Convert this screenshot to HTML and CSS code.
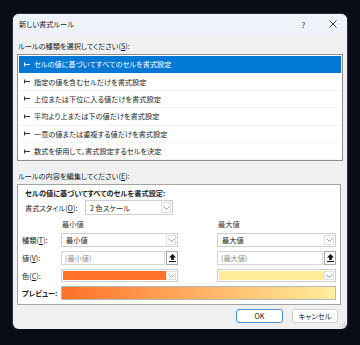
FILE: index.html
```html
<!DOCTYPE html>
<html lang="ja">

<head>
    <meta charset="UTF-8">
    <meta name="viewport" content="width=device-width, initial-scale=1.0">
    <title>新しい書式ルール</title>
    <link rel="stylesheet" href="styles.css">
</head>

<body>
    <div class="dialog">
        <div class="titlebar">
            <div class="title">新しい書式ルール</div>
            <div class="tb-btn">?</div>
            <div class="tb-btn">
                <svg width="8" height="8" viewBox="0 0 8 8"><path d="M0.5 0.5 L7.5 7.5 M7.5 0.5 L0.5 7.5" stroke="#333" stroke-width="0.9" fill="none"/></svg>
            </div>
        </div>

        <div class="body">
            <div class="label">ルールの種類を選択してください(<u>S</u>):</div>
            <div class="list">
                <div class="item selected"><svg class="bullet" width="6" height="5" viewBox="0 0 6 5"><path d="M0.6 0.5 V4.5 M0.6 2.5 H6" stroke="currentColor" stroke-width="1.1" fill="none"/></svg>セルの値に基づいてすべてのセルを書式設定</div>
                <div class="item"><svg class="bullet" width="6" height="5" viewBox="0 0 6 5"><path d="M0.6 0.5 V4.5 M0.6 2.5 H6" stroke="currentColor" stroke-width="1.1" fill="none"/></svg>指定の値を含むセルだけを書式設定</div>
                <div class="item"><svg class="bullet" width="6" height="5" viewBox="0 0 6 5"><path d="M0.6 0.5 V4.5 M0.6 2.5 H6" stroke="currentColor" stroke-width="1.1" fill="none"/></svg>上位または下位に入る値だけを書式設定</div>
                <div class="item"><svg class="bullet" width="6" height="5" viewBox="0 0 6 5"><path d="M0.6 0.5 V4.5 M0.6 2.5 H6" stroke="currentColor" stroke-width="1.1" fill="none"/></svg>平均より上または下の値だけを書式設定</div>
                <div class="item"><svg class="bullet" width="6" height="5" viewBox="0 0 6 5"><path d="M0.6 0.5 V4.5 M0.6 2.5 H6" stroke="currentColor" stroke-width="1.1" fill="none"/></svg>一意の値または重複する値だけを書式設定</div>
                <div class="item"><svg class="bullet" width="6" height="5" viewBox="0 0 6 5"><path d="M0.6 0.5 V4.5 M0.6 2.5 H6" stroke="currentColor" stroke-width="1.1" fill="none"/></svg>数式を使用して、書式設定するセルを決定</div>
            </div>

            <div class="label label2">ルールの内容を編集してください(<u>E</u>):</div>
            <div class="panel">
                <div class="heading">セルの値に基づいてすべてのセルを書式設定:</div>
                <div class="style-row">
                    <div class="style-label">書式スタイル(<u>O</u>):</div>
                    <div class="select style-select">
                        <span class="sel-text">2 色スケール</span>
                        <span class="arrow"><svg width="7" height="4" viewBox="0 0 7 4"><path d="M0.5 0.5 L3.5 3.5 L6.5 0.5" stroke="#8a8a8a" stroke-width="0.8" fill="none"/></svg></span>
                    </div>
                </div>

                <div class="scale">
                    <div></div>
                    <div class="col-head">最小値</div>
                    <div></div>
                    <div class="col-head">最大値</div>

                    <div class="row-label">種類(<u>T</u>):</div>
                    <div class="select">
                        <span class="sel-text">最小値</span>
                        <span class="arrow"><svg width="7" height="4" viewBox="0 0 7 4"><path d="M0.5 0.5 L3.5 3.5 L6.5 0.5" stroke="#8a8a8a" stroke-width="0.8" fill="none"/></svg></span>
                    </div>
                    <div></div>
                    <div class="select">
                        <span class="sel-text">最大値</span>
                        <span class="arrow"><svg width="7" height="4" viewBox="0 0 7 4"><path d="M0.5 0.5 L3.5 3.5 L6.5 0.5" stroke="#8a8a8a" stroke-width="0.8" fill="none"/></svg></span>
                    </div>

                    <div class="row-label">値(<u>V</u>):</div>
                    <div class="value-field">
                        <span class="input">(最小値)</span>
                        <span class="pick"><svg width="7" height="8" viewBox="0 0 7 8"><path d="M3.5 0 L7 3.6 H4.8 V6 H2.2 V3.6 H0 Z" fill="#111"/><rect x="0" y="7" width="7" height="1" fill="#111"/></svg></span>
                    </div>
                    <div></div>
                    <div class="value-field">
                        <span class="input">(最大値)</span>
                        <span class="pick"><svg width="7" height="8" viewBox="0 0 7 8"><path d="M3.5 0 L7 3.6 H4.8 V6 H2.2 V3.6 H0 Z" fill="#111"/><rect x="0" y="7" width="7" height="1" fill="#111"/></svg></span>
                    </div>

                    <div class="row-label">色(<u>C</u>):</div>
                    <div class="select color-select">
                        <span class="swatch min-color"></span>
                        <span class="arrow"><svg width="7" height="4" viewBox="0 0 7 4"><path d="M0.5 0.5 L3.5 3.5 L6.5 0.5" stroke="#8a8a8a" stroke-width="0.8" fill="none"/></svg></span>
                    </div>
                    <div></div>
                    <div class="select color-select">
                        <span class="swatch max-color"></span>
                        <span class="arrow"><svg width="7" height="4" viewBox="0 0 7 4"><path d="M0.5 0.5 L3.5 3.5 L6.5 0.5" stroke="#8a8a8a" stroke-width="0.8" fill="none"/></svg></span>
                    </div>

                    <div class="row-label preview-label">プレビュー:</div>
                    <div class="preview"></div>
                </div>
            </div>

            <div class="buttons">
                <div class="btn default">OK</div>
                <div class="btn">キャンセル</div>
            </div>
        </div>

        <svg class="grip" width="7" height="7" viewBox="0 0 7 7">
            <rect x="5" y="1" width="1" height="1" fill="#b5b5b5"/>
            <rect x="3" y="3" width="1" height="1" fill="#b5b5b5"/>
            <rect x="5" y="3" width="1" height="1" fill="#b5b5b5"/>
            <rect x="1" y="5" width="1" height="1" fill="#b5b5b5"/>
            <rect x="3" y="5" width="1" height="1" fill="#b5b5b5"/>
            <rect x="5" y="5" width="1" height="1" fill="#b5b5b5"/>
        </svg>
    </div>
</body>

</html>
```

FILE: styles.css
```css
* {
    margin: 0;
    padding: 0;
    box-sizing: border-box;
}

body {
    background: #090d18;
    font-family: "Noto Sans CJK JP", "Noto Sans", sans-serif;
    font-size: 7.2px;
    font-feature-settings: "palt";
    color: #1b1b1b;
}

u {
    text-underline-offset: 1px;
}

.dialog {
    position: relative;
    display: flex;
    flex-direction: column;
    width: 334px;
    height: 315px;
    margin: 14px 0 0 13px;
    background: #f0f0f0;
    border-radius: 6px;
    overflow: hidden;
    box-shadow: 0 0 0 1px #2c303a;
}

.titlebar {
    display: flex;
    align-items: center;
    height: 20px;
    padding-left: 6px;
    background: #eef3fa;
}

.title {
    flex: 1;
}

.tb-btn {
    display: flex;
    justify-content: center;
    align-items: center;
    width: 29px;
    height: 20px;
    font-size: 8px;
    color: #333;
}

.body {
    display: flex;
    flex-direction: column;
    flex: 1;
    padding: 0 4px;
}

.label {
    height: 10px;
    line-height: 10px;
    margin: 7px 0 3px 1px;
}

.label2 {
    margin-top: 10px;
}

.list {
    height: 107px;
    padding: 1px;
    background: #fff;
    border: 1px solid #8c8c8c;
}

.item {
    display: flex;
    align-items: center;
    gap: 4px;
    height: 17.4px;
    padding-left: 5px;
    border-bottom: 1px solid #f3f3f3;
    color: #1b1b1b;
}

.item .bullet {
    color: #333;
}

.item.selected {
    background: #0078d4;
    color: #fff;
    border-bottom-color: #0078d4;
}

.item.selected .bullet {
    color: #fff;
}

.panel {
    height: 121px;
    margin-right: 2px;
    padding: 3px 4px 0 4px;
    background: #fff;
    border: 1px solid #a3a3a3;
}

.heading {
    height: 10px;
    line-height: 10px;
    margin-left: 3px;
    font-weight: bold;
}

.style-row {
    display: flex;
    align-items: center;
    margin: 2px 0 0 3px;
}

.style-label {
    width: 60px;
}

.select {
    display: flex;
    align-items: center;
    height: 14px;
    padding: 1px;
    background: #fff;
    border: 1px solid #cfcfcf;
}

.style-select {
    width: 88px;
    height: 15px;
}

.sel-text {
    flex: 1;
    padding-left: 3px;
}

.arrow {
    display: flex;
    justify-content: center;
    align-items: center;
    width: 10px;
    height: 100%;
    border: 1px solid #e0e0e0;
}

.scale {
    display: grid;
    grid-template-columns: 39px 117px 39px 119px;
    grid-template-rows: 10px 14px 14px 13px 14px;
    row-gap: 4px;
    align-items: center;
    margin-top: 4px;
}

.col-head {
    padding-left: 1px;
    color: #333;
}

.row-label {
    color: #1b1b1b;
}

.value-field {
    display: flex;
    height: 14px;
    gap: 1px;
}

.input {
    display: flex;
    align-items: center;
    flex: 1;
    padding-left: 3px;
    color: #8f8f8f;
    background: #fff;
    border: 1px solid #d6d6d6;
}

.pick {
    display: flex;
    justify-content: center;
    align-items: center;
    width: 12px;
    background: #fff;
    border: 1px solid #a8a8a8;
}

.color-select {
    height: 13px;
}

.swatch {
    flex: 1;
    height: 100%;
}

.min-color {
    background: #ff7128;
}

.max-color {
    background: #ffec9a;
}

.preview-label {
    font-weight: bold;
}

.preview {
    grid-column: 2/5;
    height: 14px;
    background: linear-gradient(to right, #ff7128, #ffef9c);
    border: 1px solid #b8b8b8;
}

.buttons {
    display: flex;
    justify-content: flex-end;
    gap: 9px;
    margin: 4px 5px 0 0;
}

.btn {
    display: flex;
    justify-content: center;
    align-items: center;
    width: 46px;
    height: 14px;
    background: #fdfdfd;
    border: 1px solid #d0d0d0;
    border-radius: 3px;
}

.btn.default {
    width: 47px;
    background: #fff;
    border: 1px solid #4a8fd8;
}

.grip {
    position: absolute;
    right: 1px;
    bottom: 1px;
}
```
